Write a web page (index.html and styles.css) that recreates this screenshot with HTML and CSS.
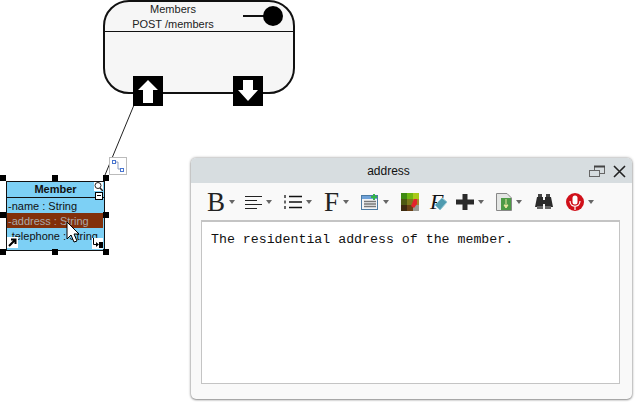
FILE: index.html
```html
<!DOCTYPE html>
<html lang="en">
<head>
    <meta charset="UTF-8">
    <title>address</title>
    <link rel="stylesheet" href="styles.css">
</head>
<body>
    <div id="canvas">
        <!-- connector between the POST port and the class -->
        <svg class="connector" width="636" height="404">
            <line x1="134" y1="105" x2="105" y2="175" stroke="#222" stroke-width="1"/>
        </svg>

        <div class="resource">
            <div class="resource-head">
                <div class="resource-name">Members</div>
                <div class="resource-name">POST /members</div>
                <svg class="lollipop" width="52" height="26">
                    <line x1="0" y1="13" x2="22" y2="13" stroke="#111" stroke-width="2"/>
                    <circle cx="30" cy="13" r="10" fill="#000"/>
                </svg>
            </div>
        </div>
        <div class="port port-up">
            <svg width="30" height="30"><path d="M15 4 L25 14 H20 V27 H10 V14 H5 Z" fill="#fff"/></svg>
        </div>
        <div class="port port-down">
            <svg width="30" height="30"><path d="M10 4 H20 V14 H25 L15 25 L5 14 H10 Z" fill="#fff"/></svg>
        </div>

        <div class="member">
            <div class="member-title">Member</div>
            <div class="member-row">-name : String</div>
            <div class="member-row selected">-address : String</div>
            <div class="member-row">-telephone : String</div>
        </div>
        <i class="handle h1"></i><i class="handle h2"></i><i class="handle h3"></i>
        <i class="handle h4"></i><i class="handle h5"></i>
        <i class="handle h6"></i><i class="handle h7"></i><i class="handle h8"></i>

        <div class="mini mini-search">
            <svg width="9" height="9"><circle cx="4" cy="3.5" r="3" fill="none" stroke="#222"/><line x1="6" y1="6" x2="9" y2="9" stroke="#222" stroke-width="1.5"/></svg>
        </div>
        <div class="mini mini-minus"></div>
        <div class="mini mini-expand">
            <svg width="11" height="11"><path d="M2 9 L8 3 M4 2.5 H8.5 V7" fill="none" stroke="#000" stroke-width="2"/></svg>
        </div>
        <div class="mini mini-route">
            <svg width="11" height="11"><path d="M1.5 0 V6.5 H6" fill="none" stroke="#000"/><path d="M4 4 L7 6.5 L4 9 Z" fill="#000"/><rect x="7" y="4" width="4" height="6" fill="#000"/></svg>
        </div>
        <div class="style-tag">
            <svg width="18" height="18">
                <path d="M5 4 H8 V11 H12" fill="none" stroke="#8a9bc0"/>
                <rect x="2.5" y="2.5" width="3" height="3" fill="#fff" stroke="#4a76d0"/>
                <rect x="10.5" y="10.5" width="3" height="3" fill="#fff" stroke="#4a76d0"/>
            </svg>
        </div>
        <svg class="cursor" width="16" height="24">
            <path d="M1 1 V18 L5 14 L8 21 L11 20 L8 13 L13 13 Z" fill="#fff" stroke="#000"/>
        </svg>

        <div class="window">
            <div class="title-bar">
                <span class="title">address</span>
                <div class="title-btns">
                    <svg width="16" height="13"><rect x="5.5" y="1.5" width="10" height="7" fill="#d7dde0" stroke="#666"/><path d="M5 1.5 H16" stroke="#444" stroke-width="2"/><rect x="0.5" y="5.5" width="10" height="6" fill="#d7dde0" stroke="#666"/></svg>
                    <svg width="13" height="13"><path d="M1 1 L12 12 M12 1 L1 12" stroke="#222" stroke-width="1.6"/></svg>
                </div>
            </div>
            <div class="toolbar">
                <div class="tool"><span class="glyph-b">B</span><i class="caret"></i></div>
                <div class="tool">
                    <svg width="18" height="16"><path d="M1 2.5 H18 M1 6.5 H13 M1 10.5 H18 M1 14.5 H13" stroke="#222"/></svg>
                    <i class="caret"></i>
                </div>
                <div class="tool">
                    <svg width="18" height="16"><path d="M5 2.5 H18 M5 8 H18 M5 13.5 H18" stroke="#111" stroke-width="1.4"/><path d="M1 1 V4 M1 6.5 V9.5 M1 12 V15" stroke="#666" stroke-width="2"/></svg>
                    <i class="caret"></i>
                </div>
                <div class="tool"><span class="glyph-f">F</span><i class="caret"></i></div>
                <div class="tool">
                    <svg width="18" height="16"><rect x="0.5" y="1.5" width="16" height="14" fill="#f2f4f6" stroke="#4c7ba3"/><rect x="1" y="2" width="15" height="3" fill="#6ea1d8"/><path d="M3 7.5 H15 M3 10 H15 M3 12.5 H15" stroke="#777" stroke-width="1.3"/><path d="M13 0 V6 M10 3 H16" stroke="#35b54a" stroke-width="2"/></svg>
                    <i class="caret"></i>
                </div>
                <div class="tool">
                    <svg width="18" height="18">
                        <rect x="0" y="0" width="6" height="6" fill="#3f8a12"/>
                        <rect x="6" y="0" width="6" height="6" fill="#6fb512"/>
                        <rect x="12" y="0" width="6" height="6" fill="#a9c91a"/>
                        <rect x="0" y="6" width="6" height="6" fill="#4d5a12"/>
                        <rect x="6" y="6" width="6" height="6" fill="#7c7a1c"/>
                        <rect x="12" y="6" width="6" height="6" fill="#a8882a"/>
                        <rect x="0" y="12" width="6" height="6" fill="#3d2a10"/>
                        <rect x="6" y="12" width="6" height="6" fill="#6a4216"/>
                        <rect x="12" y="12" width="6" height="6" fill="#9a9a94"/>
                        <path d="M10 13 L13 6 L16 6 L16 11 L13 15 Z" fill="#e3232c"/>
                    </svg>
                </div>
                <div class="tool tool-format">
                    <span class="glyph-fi">F</span>
                    <svg class="brush" width="14" height="14"><path d="M1 8 L8 1 L13 5 L6 13 Z" fill="#4f9bb0" stroke="#8fc4d2"/></svg>
                </div>
                <div class="tool">
                    <svg width="18" height="16"><path d="M0 8 H18 M9 0 V16" stroke="#2a2a2a" stroke-width="5"/></svg>
                    <i class="caret"></i>
                </div>
                <div class="tool">
                    <svg width="16" height="18"><path d="M0.5 0.5 H11 L15.5 5 V17.5 H0.5 Z" fill="#e4e6e4" stroke="#888"/><rect x="5" y="5" width="10" height="12" fill="#4d9a45"/><path d="M10 6 V11 M8 12 L10 15 L12 12 Z" stroke="#e9e6a0" fill="#e9e6a0"/></svg>
                    <i class="caret"></i>
                </div>
                <div class="tool">
                    <svg width="18" height="15"><path d="M2 3 H8 V6 H10 V3 H16 L18 13 H10 V10 H8 V13 H0 Z" fill="#2b2b2b"/><rect x="2" y="12" width="6" height="3" fill="#666"/><rect x="10" y="12" width="6" height="3" fill="#666"/><rect x="3" y="0" width="4" height="3" fill="#444"/><rect x="11" y="0" width="4" height="3" fill="#444"/></svg>
                </div>
                <div class="tool">
                    <svg width="18" height="18"><circle cx="9" cy="9" r="9" fill="#d0101a"/><rect x="6.5" y="2.5" width="5" height="9" rx="2.5" fill="#fff"/><path d="M4 8 C4 15 14 15 14 8 M9 13 V17" fill="none" stroke="#fff" stroke-width="1.2"/></svg>
                    <i class="caret"></i>
                </div>
            </div>
            <div class="editor">The residential address of the member.</div>
        </div>
    </div>
</body>
</html>
```

FILE: styles.css
```css
body {
    margin: 0;
    background: #fff;
    font-family: "Liberation Sans", Arial, sans-serif;
}
#canvas {
    position: relative;
    width: 636px;
    height: 404px;
    overflow: hidden;
}
.connector {
    position: absolute;
    left: 0;
    top: 0;
}

/* resource node */
.resource {
    position: absolute;
    left: 103px;
    top: 0;
    width: 188px;
    height: 90px;
    background: #f6f6f6;
    border: 2px solid #111;
    border-radius: 26px;
}
.resource-head {
    position: relative;
    height: 29px;
    border-bottom: 1px solid #111;
}
.resource-name {
    width: 136px;
    text-align: center;
    font-size: 11px;
    line-height: 15px;
    color: #222;
}
.lollipop {
    position: absolute;
    left: 138px;
    top: 1px;
}
.port {
    position: absolute;
    top: 76px;
    width: 30px;
    height: 30px;
    background: #000;
}
.port svg {
    display: block;
}
.port-up {
    left: 133px;
}
.port-down {
    left: 233px;
}

/* class node */
.member {
    position: absolute;
    left: 6px;
    top: 181px;
    width: 97px;
    height: 68px;
    background: #7dd0f5;
    border: 1px solid #111;
    font-size: 11px;
    color: #111;
}
.member-title {
    height: 15px;
    line-height: 15px;
    font-weight: bold;
    text-align: center;
    border-bottom: 1px solid #111;
}
.member-row {
    height: 15px;
    line-height: 17px;
    padding-left: 1px;
    margin-right: 1px;
    white-space: nowrap;
    overflow: hidden;
}
.member-row.selected {
    background: #82300a;
    color: #a9a9a9;
}
.handle {
    position: absolute;
    width: 6px;
    height: 6px;
    background: #000;
}
.h1 { left: 0; top: 175px; }
.h2 { left: 52px; top: 175px; }
.h3 { left: 103px; top: 175px; }
.h4 { left: 0; top: 212px; }
.h5 { left: 103px; top: 212px; }
.h6 { left: 0; top: 249px; }
.h7 { left: 52px; top: 249px; }
.h8 { left: 103px; top: 249px; }

.mini {
    position: absolute;
    background: #fff;
}
.mini svg {
    display: block;
}
.mini-search {
    left: 94px;
    top: 182px;
    width: 9px;
    height: 9px;
}
.mini-minus {
    left: 95px;
    top: 192px;
    width: 6px;
    height: 6px;
    border: 1px solid #000;
}
.mini-minus::after {
    content: "";
    display: block;
    height: 1px;
    margin: 2px 1px 0;
    background: #000;
}
.mini-expand {
    left: 7px;
    top: 237px;
    width: 11px;
    height: 11px;
}
.mini-route {
    left: 92px;
    top: 238px;
    width: 11px;
    height: 11px;
}
.style-tag {
    position: absolute;
    left: 109px;
    top: 157px;
    width: 16px;
    height: 16px;
    background: #fff;
    border: 1px solid #bbb;
    overflow: hidden;
}
.style-tag svg {
    display: block;
}
.cursor {
    position: absolute;
    left: 66px;
    top: 221px;
}

/* spec window */
.window {
    position: absolute;
    left: 191px;
    top: 158px;
    width: 441px;
    height: 241px;
    display: flex;
    flex-direction: column;
    background: #f9f9f9;
    border-radius: 5px;
    box-shadow: 0 0 3px rgba(0, 0, 0, 0.45), 0 1px 2px rgba(0, 0, 0, 0.3);
    overflow: hidden;
}
.title-bar {
    position: relative;
    flex: none;
    height: 25px;
    padding-right: 46px;
    background: #d7dde0;
    text-align: center;
}
.title {
    font-size: 12px;
    line-height: 27px;
    color: #111;
}
.title-btns {
    position: absolute;
    right: 6px;
    top: 7px;
    display: flex;
    gap: 8px;
}
.title-btns svg {
    display: block;
}
.toolbar {
    flex: none;
    display: flex;
    align-items: center;
    height: 37px;
    padding-left: 16px;
}
.tool {
    flex: none;
    display: flex;
    align-items: center;
    gap: 4px;
    width: 40px;
}
.tool:nth-child(1) { width: 37px; }
.tool:nth-child(4) { width: 37px; }
.tool:nth-child(6) { width: 29px; }
.tool:nth-child(7) { width: 26px; }
.tool:nth-child(9) { width: 39px; }
.tool:nth-child(10) { width: 31px; }
.tool svg {
    display: block;
}
.tool-format {
    position: relative;
}
.brush {
    position: absolute;
    left: 4px;
    top: 7px;
}
.caret {
    width: 0;
    height: 0;
    border-left: 3px solid transparent;
    border-right: 3px solid transparent;
    border-top: 4px solid #666;
}
.glyph-b, .glyph-f {
    font-family: "Liberation Serif", serif;
    font-size: 27px;
    line-height: 26px;
    color: #222;
}
.glyph-fi {
    font-family: "Liberation Serif", serif;
    font-style: italic;
    font-size: 22px;
    line-height: 24px;
    color: #111;
}
.editor {
    flex: none;
    box-sizing: border-box;
    width: 419px;
    height: 164px;
    margin-left: 10px;
    padding: 11px 9px;
    background: #fff;
    border: 1px solid #c4c4c4;
    border-top-width: 2px;
    font-family: "Liberation Mono", monospace;
    font-size: 13.25px;
    line-height: 14px;
    color: #111;
}
```
